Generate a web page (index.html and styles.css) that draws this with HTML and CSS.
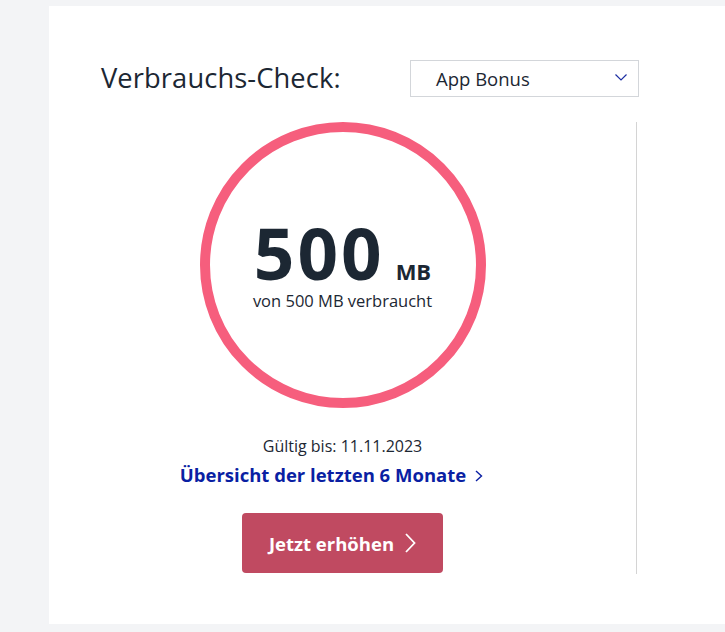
FILE: index.html
```html
<!DOCTYPE html>
<html lang="de">
<head>
<meta charset="utf-8">
<title>Verbrauchs-Check</title>
<link rel="stylesheet" href="styles.css">
</head>
<body>
<div class="card">
  <div class="header">
    <h2 class="title">Verbrauchs-Check:</h2>
    <div class="select">
      <span class="select-label">App Bonus</span>
      <svg class="select-chevron" width="12" height="7" viewBox="0 0 12 7"><polyline points="0.5,0.5 6,6 11.5,0.5" fill="none" stroke="#1d2fa3" stroke-width="1.2"/></svg>
    </div>
  </div>
  <div class="body">
    <div class="usage">
      <div class="ring">
        <div class="amount"><span class="num">500</span><span class="unit">MB</span></div>
        <div class="of">von 500 MB verbraucht</div>
      </div>
      <div class="valid">Gültig bis: 11.11.2023</div>
      <a class="link" href="#">Übersicht der letzten 6 Monate
        <svg class="link-chevron" width="8" height="12" viewBox="0 0 8 12"><polyline points="1,1 6.5,6 1,11" fill="none" stroke="#0a1fa3" stroke-width="1.4"/></svg>
      </a>
      <button class="btn">Jetzt erhöhen
        <svg class="btn-chevron" width="11" height="20" viewBox="0 0 11 20"><polyline points="1,1 9.5,10 1,19" fill="none" stroke="#ffffff" stroke-width="1.8"/></svg>
      </button>
    </div>
  </div>
</div>
</body>
</html>
```
FILE: styles.css
```css
html, body {
  margin: 0;
  padding: 0;
  background: #f3f4f6;
  overflow: hidden;
}
body {
  font-family: "Open Sans", "Liberation Sans", sans-serif;
  color: #1c2733;
}
.card {
  margin: 6px 0 0 49px;
  width: 676px;
  height: 618px;
  background: #ffffff;
  box-sizing: border-box;
}
.header {
  width: 590px;
  height: 116px;
  box-sizing: border-box;
  padding: 54px 0 0 52px;
  display: flex;
  justify-content: space-between;
  align-items: flex-start;
}
.title {
  margin: 0;
  font-size: 27.3px;
  font-weight: 400;
  line-height: 36px;
  color: #1c2733;
  letter-spacing: 0.1px;
}
.select {
  width: 229px;
  height: 37px;
  box-sizing: border-box;
  border: 1px solid #d3d6da;
  display: flex;
  align-items: center;
  padding: 0 11px 0 25px;
  justify-content: space-between;
}
.select-label {
  font-size: 18.5px;
  color: #1c2733;
}
.select-chevron {
  display: block;
  margin-top: -2px;
}
.body {
  display: flex;
}
.usage {
  width: 588px;
  height: 452px;
  box-sizing: border-box;
  border-right: 1px solid #d4d4d4;
  display: flex;
  flex-direction: column;
  align-items: center;
}
.ring {
  width: 286px;
  height: 286px;
  box-sizing: border-box;
  border: 10px solid #f65e7d;
  border-radius: 50%;
  display: flex;
  flex-direction: column;
  align-items: center;
  justify-content: center;
  padding-top: 13px;
}
.amount {
  display: flex;
  align-items: baseline;
  line-height: 42px;
}
.num {
  font-size: 71px;
  font-weight: 700;
  color: #1c2733;
  letter-spacing: 3px;
}
.unit {
  font-size: 22px;
  font-weight: 700;
  margin-left: 11px;
  color: #1c2733;
}
.of {
  font-size: 16.5px;
  line-height: 22px;
  margin-top: -2px;
  color: #1c2733;
}
.valid {
  margin-top: 26px;
  font-size: 16px;
  line-height: 24px;
  color: #1c2733;
}
.link {
  margin-top: 4px;
  margin-right: 22px;
  font-size: 18.5px;
  font-weight: 700;
  line-height: 26px;
  color: #0a1fa3;
  text-decoration: none;
  display: flex;
  align-items: center;
  gap: 9px;
}
.link-chevron {
  display: block;
  margin-top: 1px;
}
.btn {
  margin-top: 25px;
  width: 201px;
  height: 60px;
  border: 0;
  border-radius: 4px;
  background: #c04a61;
  color: #ffffff;
  font-family: "Open Sans", "Liberation Sans", sans-serif;
  font-size: 18.5px;
  font-weight: 700;
  display: flex;
  align-items: center;
  justify-content: center;
  gap: 11px;
  padding: 0;
}
```
